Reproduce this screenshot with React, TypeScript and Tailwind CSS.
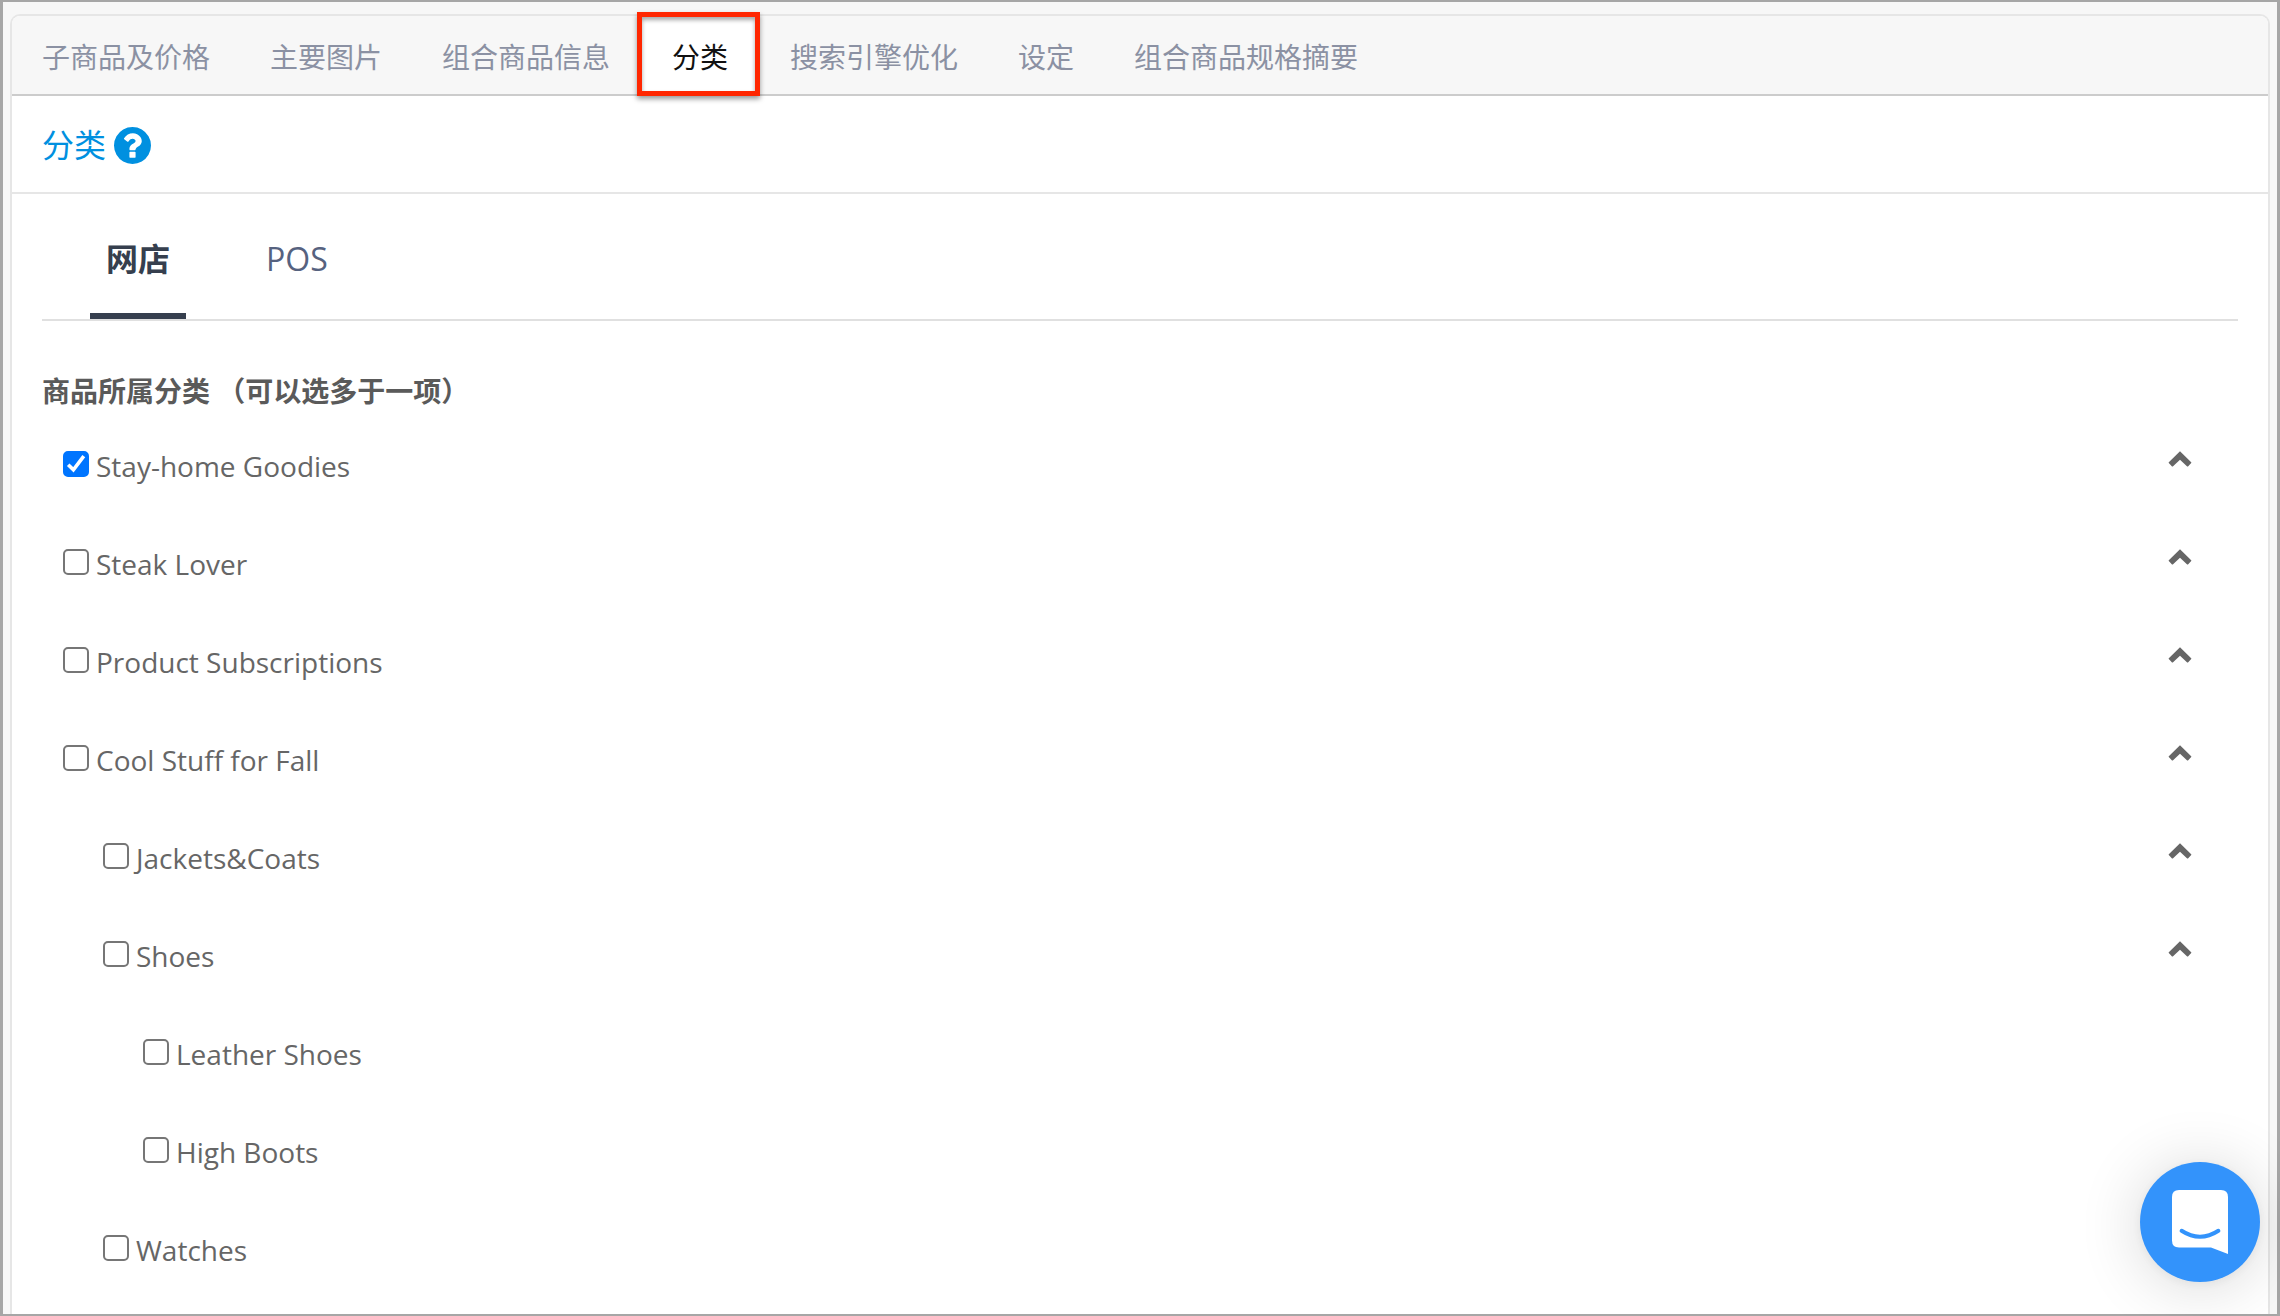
import { useState } from 'react';

interface Category {
  id: string;
  name: string;
  level: number;
  collapsible: boolean;
}

const productTabs = [
  '子商品及价格',
  '主要图片',
  '组合商品信息',
  '分类',
  '搜索引擎优化',
  '设定',
  '组合商品规格摘要',
];

const channelTabs = ['网店', 'POS'];

const categories: Category[] = [
  { id: 'stay-home', name: 'Stay-home Goodies', level: 0, collapsible: true },
  { id: 'steak', name: 'Steak Lover', level: 0, collapsible: true },
  { id: 'subscriptions', name: 'Product Subscriptions', level: 0, collapsible: true },
  { id: 'fall', name: 'Cool Stuff for Fall', level: 0, collapsible: true },
  { id: 'jackets', name: 'Jackets&Coats', level: 1, collapsible: true },
  { id: 'shoes', name: 'Shoes', level: 1, collapsible: true },
  { id: 'leather-shoes', name: 'Leather Shoes', level: 2, collapsible: false },
  { id: 'high-boots', name: 'High Boots', level: 2, collapsible: false },
  { id: 'watches', name: 'Watches', level: 1, collapsible: false },
];

const indents = ['pl-[21px]', 'pl-[61px]', 'pl-[101px]'];

function QuestionIcon() {
  return (
    <svg viewBox="128 128 1536 1536" className="size-[37px]" fill="currentColor">
      <path d="M1024 1376v-192q0-14-9-23t-23-9h-192q-14 0-23 9t-9 23v192q0 14 9 23t23 9h192q14 0 23-9t9-23zM1280 704q0-88-55.5-163t-138.5-116-170-41q-243 0-371 213-15 24 8 42l132 100q7 6 19 6 16 0 25-12 53-68 86-92 34-24 86-24 48 0 85.5 26t37.5 59q0 38-20 61t-68 45q-63 28-115.5 86.5t-52.5 125.5v36q0 14 9 23t23 9h192q14 0 23-9t9-23q0-19 21.5-49.5t54.5-49.5q32-18 49-28.5t46-35 44.5-48 28-60.5 12.5-81zM1664 896q0 209-103 385.5t-279.5 279.5-385.5 103-385.5-103-279.5-279.5-103-385.5 103-385.5 279.5-279.5 385.5-103 385.5 103 279.5 279.5 103 385.5z" />
    </svg>
  );
}

function ChevronUpIcon() {
  return (
    <svg viewBox="0 0 24 16" className="h-4 w-6" fill="currentColor">
      <path d="M12 0.2 23.2 11.2Q23.6 11.6 23.2 12L20 15.4Q19.6 15.8 19.2 15.4L12 8.8 4.8 15.4Q4.4 15.8 4 15.4L0.8 12Q0.4 11.6 0.8 11.2Z" />
    </svg>
  );
}

function ProductTabs() {
  const [active, setActive] = useState('分类');

  return (
    <nav className="flex h-20 rounded-t-lg border-b-2 border-[#cccccc] bg-[#f7f7f7]">
      {productTabs.map((tab) =>
        tab === active ? (
          <button
            key={tab}
            type="button"
            className="relative border-x-2 border-[#f7f7f7] bg-white px-[30px] pt-[3px] text-[28px] text-[#111111]"
          >
            {tab}
            <span className="absolute -top-1 -right-0.5 -bottom-0.5 -left-[5px] border-[5px] border-[#ff2600] shadow-[0_3px_5px_rgba(0,0,0,0.4),inset_0_3px_4px_rgba(0,0,0,0.35)]"></span>
          </button>
        ) : (
          <button
            key={tab}
            type="button"
            onClick={() => setActive(tab)}
            className="px-[30px] pt-[3px] text-[28px] text-[#8b91a3]"
          >
            {tab}
          </button>
        )
      )}
    </nav>
  );
}

function ChannelTabs() {
  const [active, setActive] = useState('网店');

  return (
    <nav className="flex gap-16 border-b-2 border-[#e0e0e0] px-12 pt-[41px]">
      {channelTabs.map((tab) => (
        <button
          key={tab}
          type="button"
          onClick={() => setActive(tab)}
          className={
            tab === active
              ? 'border-b-[6px] border-[#363f4e] px-4 pb-[30px] text-[32px] leading-[48px] font-bold text-[#363f4e]'
              : 'border-b-[6px] border-transparent px-4 pb-[30px] text-[32px] leading-[48px] text-[#56627f]'
          }
        >
          {tab}
        </button>
      ))}
    </nav>
  );
}

interface CategoryRowProps {
  category: Category;
  checked: boolean;
  onToggle: () => void;
}

function CategoryRow({ category, checked, onToggle }: CategoryRowProps) {
  return (
    <li className={`flex items-start justify-between pr-[46px] ${indents[category.level]}`}>
      <div className="flex items-start gap-[7px]">
        <div className="mt-1.5 grid size-[26px]">
          <input
            id={category.id}
            type="checkbox"
            checked={checked}
            onChange={onToggle}
            className="peer col-start-1 row-start-1 size-[26px] appearance-none rounded-[5px] border-2 border-[#767676] bg-white checked:border-[#0075ff] checked:bg-[#0075ff]"
          />
          <svg
            viewBox="0 0 26 26"
            className="pointer-events-none invisible col-start-1 row-start-1 size-[26px] peer-checked:visible"
            fill="none"
            stroke="white"
            strokeWidth="3.6"
          >
            <path d="M5.2 13.8 10.4 18.8 20.8 5.2" />
          </svg>
        </div>
        <label htmlFor={category.id} className="text-[28px] leading-[42px] text-[#666666]">
          {category.name}
        </label>
      </div>
      {category.collapsible && (
        <button type="button" aria-label={category.name} className="mt-1.5 text-[#666666]">
          <ChevronUpIcon />
        </button>
      )}
    </li>
  );
}

function ChatLauncher() {
  return (
    <button
      type="button"
      aria-label="Chat"
      className="fixed right-5 bottom-[34px] flex size-[120px] items-center justify-center rounded-full bg-[#3393fb] shadow-[0_2px_12px_rgba(0,0,0,0.06),0_4px_64px_rgba(0,0,0,0.16)]"
    >
      <svg viewBox="0 0 56 64" className="h-16 w-14">
        <path
          d="M7 0H49Q56 0 56 7V64L39 57.4H7Q0 57.4 0 50.4V7Q0 0 7 0Z"
          fill="white"
        />
        <path
          d="M9.6 40.8Q28 52.8 46.4 40.8"
          fill="none"
          stroke="#3393fb"
          strokeWidth="4"
          strokeLinecap="round"
        />
      </svg>
    </button>
  );
}

export default function App() {
  const [selected, setSelected] = useState<string[]>(['stay-home']);

  const toggle = (id: string) => {
    setSelected((prev) =>
      prev.includes(id) ? prev.filter((item) => item !== id) : [...prev, id]
    );
  };

  return (
    <div className="flex min-h-screen flex-col border-x-3 border-y-2 border-[#a6a6a6] bg-[#f7f7f7] px-[7px] pt-3 font-['Open_Sans','Noto_Sans_CJK_SC',sans-serif]">
      <main className="flex-1 rounded-t-[10px] border-2 border-b-0 border-[#e6e6e6] bg-white">
        <ProductTabs />

        <header className="flex h-[98px] items-center gap-2 border-b-2 border-[#e6e6e6] px-[30px] pt-0.5 text-[#0090e0]">
          <h1 className="text-[32px] leading-[48px]">分类</h1>
          <QuestionIcon />
        </header>

        <div className="px-[30px]">
          <ChannelTabs />

          <h2 className="mt-[50px] text-[28px] leading-10 font-bold text-[#5a5a5a]">
            商品所属分类 （可以选多于一项）
          </h2>

          <ul className="mt-[34px] flex flex-col gap-14">
            {categories.map((category) => (
              <CategoryRow
                key={category.id}
                category={category}
                checked={selected.includes(category.id)}
                onToggle={() => toggle(category.id)}
              />
            ))}
          </ul>
        </div>
      </main>

      <ChatLauncher />
    </div>
  );
}
